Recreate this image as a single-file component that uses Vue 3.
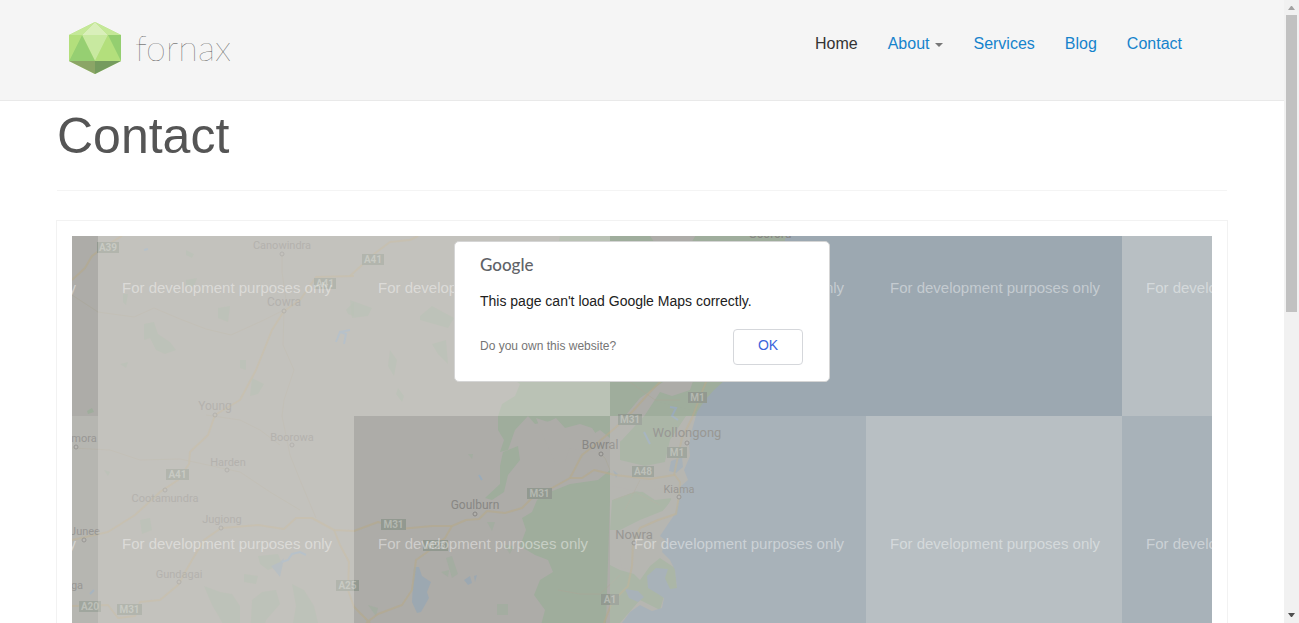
<script setup>
const links = [
  { text: 'Home', active: true },
  { text: 'About', caret: true },
  { text: 'Services' },
  { text: 'Blog' },
  { text: 'Contact' }
]

const places = [
  { name: 'Canowindra', x: 282, y: 249, mx: 282, my: 254, size: 11, faint: true },
  { name: 'Cowra', x: 284, y: 306, mx: 284, my: 311, size: 12, faint: true },
  { name: 'Young', x: 215, y: 410, mx: 215, my: 415, size: 12, faint: true },
  { name: 'Boorowa', x: 292, y: 441, mx: 292, my: 445, size: 11, faint: true },
  { name: 'Harden', x: 228, y: 466, mx: 227, my: 470, size: 11, faint: true },
  { name: 'Cootamundra', x: 165, y: 502, mx: 165, my: 490, size: 11, faint: true },
  { name: 'Jugiong', x: 222, y: 523, mx: 221, my: 528, size: 11, faint: true },
  { name: 'Gundagai', x: 179, y: 578, mx: 179, my: 582, size: 11, faint: true },
  { name: 'mora', x: 84, y: 442, mx: 76, my: 447, size: 11 },
  { name: 'Junee', x: 85, y: 535, mx: 84, my: 540, size: 11 },
  { name: 'ga', x: 77, y: 589, mx: 60, my: 594, size: 11 },
  { name: 'Goulburn', x: 475, y: 509, mx: 475, my: 514, size: 12 },
  { name: 'Bowral', x: 600, y: 449, mx: 601, my: 454, size: 12 },
  { name: 'Wollongong', x: 687, y: 437, mx: 687, my: 443, size: 13 },
  { name: 'Kiama', x: 679, y: 493, mx: 679, my: 497, size: 11 },
  { name: 'Nowra', x: 634, y: 539, mx: 634, my: 543, size: 13 },
  { name: 'Gosford', x: 770, y: 238, mx: 770, my: 244, size: 12 }
]

const shields = [
  { t: 'A39', x: 97, y: 242, w: 22 },
  { t: 'A41', x: 362, y: 254, w: 22 },
  { t: 'A41', x: 314, y: 278, w: 22 },
  { t: 'A41', x: 166, y: 469, w: 23 },
  { t: 'A25', x: 336, y: 580, w: 23 },
  { t: 'A20', x: 79, y: 601, w: 22 },
  { t: 'M31', x: 117, y: 604, w: 25 },
  { t: 'M31', x: 381, y: 519, w: 25 },
  { t: 'M31', x: 527, y: 488, w: 25 },
  { t: 'M23', x: 423, y: 540, w: 25 },
  { t: 'A1', x: 601, y: 594, w: 18 },
  { t: 'M31', x: 618, y: 414, w: 24 },
  { t: 'M1', x: 688, y: 392, w: 19 },
  { t: 'M1', x: 667, y: 447, w: 20 },
  { t: 'A48', x: 632, y: 466, w: 22 }
]

const veils = [
  { x: 98, y: 160, tone: 'light' },
  { x: 354, y: 160, tone: 'light' },
  { x: 1122, y: 160, tone: 'light' },
  { x: -158, y: 416, tone: 'mid' },
  { x: 98, y: 416, tone: 'light' },
  { x: 610, y: 416, tone: 'mid' },
  { x: 866, y: 416, tone: 'light' },
  { x: 1122, y: 416, tone: 'mid' }
]

const marks = [293, 549].flatMap((y) => [-134, 122, 378, 634, 890, 1146].map((x) => ({ x, y })))
</script>

<template>
  <div class="window">
    <div class="page">
      <header class="header">
        <div class="container bar">
          <a class="logo" href="#" aria-label="fornax">
            <svg class="gem" viewBox="0 0 52 52" aria-hidden="true">
              <path d="M26 0 52 13 52 39 26 52 0 39 0 13Z" fill="#b3df7c" />
              <path d="M26 0 39 13H13Z" fill="#d9efba" />
              <path d="M26 0 13 13H0ZM26 0 39 13H52Z" fill="#c4e897" />
              <path d="M13 13H39L26 39Z" fill="#c8e9a0" />
              <path d="M13 13 26 39H0Z" fill="#96cf72" />
              <path d="M0 13H13L0 39ZM39 13 52 39H26Z" fill="#b3df7c" />
              <path d="M39 13H52V39Z" fill="#94ce70" />
              <path d="M0 39H26V52Z" fill="#8ba566" />
              <path d="M26 39H52L26 52Z" fill="#759b5e" />
            </svg>
            <span class="wordmark">fornax</span>
          </a>
          <nav class="nav" aria-label="Main">
            <a v-for="l in links" :key="l.text" href="#" :class="{ active: l.active }">{{ l.text }}<i v-if="l.caret" class="caret"></i></a>
          </nav>
        </div>
      </header>

      <main class="container">
        <h1>Contact</h1>
        <section class="card">
          <div class="map">
            <svg class="terrain" viewBox="72 236 1140 500" preserveAspectRatio="xMidYMin slice" role="img" aria-label="Map">
              <rect x="-600" y="160" width="2600" height="600" fill="#adaca8" />

              <g class="forest">
                <path d="M498 416 502 404 515 396 520 384 500 370 520 340 545 300 560 236H850V416H610V500L606 623V736H538L537 640 545 610 534 595 540 580 553 572 548 560 535 555 520 546 526 530 522 518 532 512 537 500 550 492 570 484 598 480 610 470V438L600 430 590 436 580 430 570 445 565 460 556 455 560 440 550 428 556 420 535 424 528 416 515 430 508 450 500 452 504 440 498 430Z" />
                <path d="M620 420 650 400 690 410 670 440 665 462 645 466 620 460Z" />
                <path d="M612 500 640 490 655 500 672 498 665 510 640 520 620 530 610 530ZM610 565 620 570 634 574 640 580 650 566 660 558 675 568 677 588 664 596 660 610 640 600 620 623V736H610Z" />
                <path d="M503 452 518 446 520 460 508 475 504 492 492 500 485 498 500 484 500 466Z" />
                <path d="M87 411 92 408 94 412 88 414Z" />
              </g>

              <g class="forest sparse">
                <path d="M144 324 154 322 158 334 170 342 176 350 165 354 156 350 150 338 144 340Z" />
                <path d="M186 250 194 254 192 258 186 255ZM186 280 197 278 194 286 186 287ZM123 294 128 294 126 305 123 302ZM218 308 230 306 228 322 218 318ZM240 360 246 360 246 370 240 368ZM252 378 264 384 258 394 250 396ZM346 310 354 302V316L348 314ZM120 364 128 362 126 368Z" />
                <path d="M350 300 372 308 368 316 352 318ZM420 316 432 306 454 318 448 328 420 320ZM390 350 397 360 394 376 388 366ZM432 344 446 340 448 364 438 354ZM398 388 404 396 402 402 396 394Z" />
                <path d="M204 586 220 592 232 594 240 606 240 640H226L222 622 212 605ZM244 574 258 576 256 584 244 582ZM258 556 278 554 282 564 268 570 260 564ZM252 600 262 592 276 590 280 604 266 620 262 640H250ZM292 584 304 590 314 606 322 640H290L296 606ZM140 520 150 518 152 530 142 534ZM104 470 110 472 108 476Z" />
                <path d="M446 558 452 556 458 574 452 578ZM441 572 449 570 448 577ZM497 604H508V615H497ZM487 522H495L492 531ZM368 605 378 608 376 616ZM468 454 473 454 472 459ZM504 545 514 546 510 554Z" />
              </g>

              <g class="settled">
                <path d="M625 416 640 398 660 384 700 360 690 390 672 396 660 392 645 415 622 440 610 450V475L655 482 665 462 670 446 690 425 686 484 676 516 660 532 662 548 646 556 634 548 640 532 655 520 672 500 664 488 640 492 612 486V440Z" />
                <path d="M536 418 548 422 556 418 565 428 580 424 592 428 600 440 604 450 590 452 570 448 565 462 555 462 545 440ZM620 556 632 550 634 570 622 568Z" />
                <path d="M645 228H700L690 245H656Z" />
              </g>

              <g class="sea">
                <path d="M788 228 780 260 750 320 724 381 714 390 705 400 697 412 692 430 689 445 690 456 684 470 688 480 680 487 679 500 675 514 668 524 660 536 665 540 662 552 670 560 675 570 677 588 670 589 665 578 668 569 656 568 647 576 648 588 658 594 664 598 662 608 652 611 640 605 630 612 622 623 610 640V740H2000V160H788Z" />
                <path d="M671 461 682 457 683 467 676 473 669 471ZM625 589 638 591 644 597 638 602 629 598Z" />
                <path d="M414 567 419 567 422 576 431 582 427 592 429 598 421 612 417 613 412 602ZM464 580 470 576 472 583 468 585ZM474 576 477 575 475 582ZM271 566 280 562 284 558 282 568 280 577 276 572ZM613 470 618 474 616 478Z" />
              </g>

              <g class="creeks">
                <path d="M282 562 288 560 292 554 300 552 306 555M336 342 340 332 346 334 344 344M340 332 350 330M90 594 94 590M479 475 482 480M670 407 676 408 672 416 678 420M644 432 650 444M144 250 148 249" />
              </g>

              <g class="lanes">
                <path d="M72 295 98 312 134 317 154 308 180 319 206 329 231 335 264 320 284 310 283 345 294 370 284 400 282 416 290 455 300 480 316 518" />
                <path d="M72 448 110 450 140 460 180 459 240 472 270 492 300 510M282 254 282 272 286 300M610 470 605 458 598 452M680 400 655 400 630 382M206 415 240 420 260 430 280 445" />
                <path d="M558 590 580 594 600 594 620 575M614 500 635 492 660 505M640 480 625 510" />
              </g>

              <g class="roads">
                <path d="M72 280 85 268 92 256 100 250 112 242 122 236" />
                <path d="M354 276 316 277 300 300 284 311 272 330 256 370 240 400 215 415 208 435 190 452 189 464 178 480 160 492 135 515 108 532 72 540" />
                <path d="M72 606 108 605 118 618 135 616 140 602 160 600 178 585 192 560 204 540 221 528 258 525 284 529 296 518 312 518 334 530 354 531 378 522 400 529 432 526 452 526 466 520 479 519 487 511 505 513 522 508 535 495 552 488 570 478 582 455 601 440 615 428 632 412 650 392 662 380" />
                <path d="M334 530 340 545 349 562 348 590 354 607 370 623M452 526 445 538 430 550 416 560 412 590 402 605 378 614 366 623" />
                <path d="M350 276 374 254 390 242 410 240 418 236M570 478 582 478 594 470 615 475 650 479 674 475 682 438 692 418 702 392 710 372" />
                <path d="M674 474 680 482 679 496 676 514 658 520 640 528 633 543 632 566 628 586 612 602 604 623" />
              </g>

              <g class="shields">
                <g v-for="(s, i) in shields" :key="i">
                  <rect :x="s.x" :y="s.y" :width="s.w" height="11" />
                  <text :x="s.x + s.w / 2" :y="s.y + 9">{{ s.t }}</text>
                </g>
              </g>

              <g class="places">
                <g v-for="p in places" :key="p.name" :class="{ faint: p.faint }">
                  <text :x="p.x" :y="p.y" :font-size="p.size">{{ p.name }}</text>
                  <circle :cx="p.mx" :cy="p.my" r="2" />
                </g>
              </g>

              <rect v-for="(v, i) in veils" :key="i" :x="v.x" :y="v.y" width="256" height="256" :class="v.tone" />

              <g class="marks">
                <text v-for="(m, i) in marks" :key="i" :x="m.x" :y="m.y">For development purposes only</text>
              </g>
            </svg>

            <div class="dialog" role="dialog" aria-label="Google Maps error">
              <div class="brand">Google</div>
              <p class="message">This page can't load Google Maps correctly.</p>
              <div class="actions">
                <a href="#">Do you own this website?</a>
                <button type="button">OK</button>
              </div>
            </div>
          </div>
        </section>
      </main>
    </div>

    <div class="scrollbar" aria-hidden="true">
      <svg class="arrow up" viewBox="0 0 15 15"><path d="M4 10 7 6H8L11 10Z" /></svg>
      <div class="track"><div class="thumb"></div></div>
      <svg class="arrow down" viewBox="0 0 15 15"><path d="M4 5H11L8 9H7Z" /></svg>
    </div>
  </div>
</template>

<style>
body {
  margin: 0;
  overflow: hidden;
}
</style>

<style scoped>
.window {
  display: flex;
  height: 100vh;
  overflow: hidden;
  background: #fff;
  font-family: "Liberation Sans", Arial, sans-serif;
}
.page {
  flex: 1;
  min-width: 0;
  overflow: hidden;
}
.container {
  box-sizing: border-box;
  max-width: 1172px;
  margin: 0 auto;
}
.header {
  background: #f5f5f5;
  border-bottom: 1px solid #e9e9e9;
}
.bar {
  display: flex;
  justify-content: space-between;
  align-items: flex-start;
  height: 100px;
  padding: 22px 46px 0 13px;
}
.logo {
  display: flex;
  gap: 14px;
  color: #444;
  text-decoration: none;
}
.gem {
  width: 52px;
  height: 52px;
}
.wordmark {
  font-family: Lato, sans-serif;
  font-size: 36px;
  font-weight: 100;
  line-height: 50px;
}
.nav {
  display: flex;
  gap: 30px;
  padding-top: 12px;
}
.nav a {
  display: flex;
  align-items: center;
  font-size: 16px;
  line-height: 20px;
  color: #1583cc;
  text-decoration: none;
}
.nav a.active {
  color: #333;
}
.caret {
  margin: 2px 0 0 6px;
  border: 4px solid transparent;
  border-top-color: #777;
  border-bottom: 0;
}
h1 {
  margin: 0 1px 29px;
  padding: 5px 0 24px;
  border-bottom: 1px solid #f4f4f4;
  font-size: 50px;
  line-height: 60px;
  font-weight: 400;
  color: #555;
}
.card {
  padding: 15px;
  border: 1px solid #f2f2f2;
}
.map {
  position: relative;
  height: 500px;
  overflow: hidden;
}
.terrain {
  display: block;
  width: 100%;
  height: 100%;
}
.forest {
  fill: #9fad9c;
}
.sparse {
  fill-opacity: 0.6;
}
.settled {
  fill: #adaca8;
}
.sea {
  fill: #9ca8b1;
}
.creeks {
  fill: none;
  stroke: #9aabba;
  stroke-width: 2;
}
.lanes {
  fill: none;
  stroke: #aaa698;
  stroke-opacity: 0.6;
}
.roads {
  fill: none;
  stroke: #b3a98f;
  stroke-width: 2;
  stroke-linejoin: round;
  stroke-opacity: 0.7;
}
.shields rect {
  fill: #929990;
}
.shields text {
  fill: #b4b8b1;
  font: 700 10px Roboto, sans-serif;
  text-anchor: middle;
}
.places text {
  fill: #888784;
  font-family: Roboto, sans-serif;
  text-anchor: middle;
}
.places circle {
  fill: #b0afab;
  stroke: #888784;
}
.places .faint {
  opacity: 0.65;
}
.light {
  fill: #efebe4;
  fill-opacity: 0.35;
}
.mid {
  fill: #e4e1de;
  fill-opacity: 0.18;
}
.marks text {
  fill: #fff;
  fill-opacity: 0.42;
  font-size: 15px;
}
.dialog {
  position: absolute;
  top: 5px;
  left: 50%;
  transform: translateX(-50%);
  box-sizing: border-box;
  width: 376px;
  padding: 14px 26px 16px 25px;
  border: 1px solid #d5d5d5;
  border-radius: 5px;
  background: #fff;
}
.brand {
  font: 500 17px/18px Lato, sans-serif;
  color: #5f6368;
}
.message {
  margin: 18px 0 19px;
  font-size: 14px;
  line-height: 18px;
  color: #212121;
}
.actions {
  display: flex;
  justify-content: space-between;
  align-items: center;
}
.actions a {
  padding-bottom: 2px;
  font-size: 12px;
  color: #757575;
  text-decoration: none;
}
.actions button {
  box-sizing: border-box;
  width: 70px;
  height: 36px;
  padding: 0 0 4px;
  border: 1px solid #d5d7db;
  border-radius: 4px;
  background: #fff;
  font: 14px "Liberation Sans", Arial, sans-serif;
  color: #3b65dc;
}
.scrollbar {
  display: flex;
  flex-direction: column;
  width: 15px;
  background: #f1f1f1;
}
.arrow {
  width: 15px;
  height: 15px;
}
.up {
  fill: #a3a3a3;
}
.down {
  fill: #505050;
}
.track {
  flex: 1;
  padding: 0 2px;
}
.thumb {
  height: 50%;
  background: #c1c1c1;
}
</style>
